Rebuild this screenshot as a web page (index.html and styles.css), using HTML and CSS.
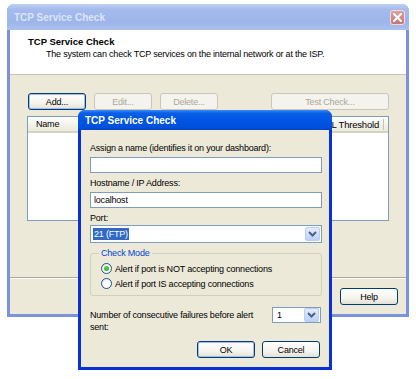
FILE: index.html
```html
<!DOCTYPE html>
<html lang="en">
<head>
  <meta charset="UTF-8" />
  <title>TCP Service Check</title>
  <link rel="stylesheet" href="styles.css">
</head>
<body>
  <div class="desktop">

    <!-- Background window (inactive) -->
    <div class="window main-window">
      <div class="titlebar inactive">
        <span class="title-text">TCP Service Check</span>
        <span class="close-btn">
          <svg width="9" height="9" viewBox="0 0 9 9"><path d="M1 1 L8 8 M8 1 L1 8" stroke="#fff" stroke-width="2" stroke-linecap="square"/></svg>
        </span>
      </div>
      <div class="window-body">
        <div class="banner">
          <div class="banner-title">TCP Service Check</div>
          <div class="banner-sub">The system can check TCP services on the internal network or at the ISP.</div>
        </div>
        <div class="panel">
          <div class="toolbar">
            <button class="btn default">Add...</button>
            <button class="btn" disabled>Edit...</button>
            <button class="btn" disabled>Delete...</button>
            <span class="spacer"></span>
            <button class="btn wide" disabled>Test Check...</button>
          </div>
          <div class="listview">
            <div class="lv-head">
              <span class="col-name">Name</span>
              <span class="col-thresh">FAIL Threshold</span>
            </div>
          </div>
        </div>
        <div class="footer">
          <button class="btn">Help</button>
        </div>
      </div>
    </div>

    <!-- Modal dialog (active) -->
    <div class="window dialog">
      <div class="titlebar active">
        <span class="title-text">TCP Service Check</span>
      </div>
      <div class="dialog-body">
        <label class="field-label">Assign a name (identifies it on your dashboard):</label>
        <input class="textbox" type="text" value="">

        <label class="field-label">Hostname / IP Address:</label>
        <input class="textbox" type="text" value="localhost">

        <label class="field-label">Port:</label>
        <div class="combo">
          <span class="combo-value"><span class="selected">21 (FTP)</span></span>
          <span class="combo-arrow">
            <svg width="9" height="6" viewBox="0 0 9 6"><path d="M1 1 L4.5 4.5 L8 1" fill="none" stroke="#4d6185" stroke-width="2"/></svg>
          </span>
        </div>

        <fieldset class="groupbox">
          <legend>Check Mode</legend>
          <div class="radio-row"><span class="radio checked"></span>Alert if port is NOT accepting connections</div>
          <div class="radio-row"><span class="radio"></span>Alert if port IS accepting connections</div>
        </fieldset>

        <div class="failures-row">
          <span class="failures-text">Number of consecutive failures before alert sent:</span>
          <div class="combo small">
            <span class="combo-value">1</span>
            <span class="combo-arrow">
              <svg width="9" height="6" viewBox="0 0 9 6"><path d="M1 1 L4.5 4.5 L8 1" fill="none" stroke="#4d6185" stroke-width="2"/></svg>
            </span>
          </div>
        </div>

        <div class="dialog-buttons">
          <button class="btn default">OK</button>
          <button class="btn">Cancel</button>
        </div>
      </div>
    </div>

  </div>
</body>
</html>
```

FILE: styles.css
```css
:root {
  --face: #ece9d8;
  --shadow: #aca899;
  --field-border: #7f9db9;
  --btn-border: #003c74;
  --disabled: #aca899;
  --active-frame: #0831d9;
  --inactive-frame: #7b93dd;
}

* {
  box-sizing: border-box;
}

body {
  margin: 0;
  background: #fff;
  font-family: 'Liberation Sans', Arial, sans-serif;
  font-size: 9px;
  letter-spacing: -0.2px;
  color: #000;
}

.desktop {
  position: relative;
  width: 416px;
  height: 379px;
  overflow: hidden;
}

/* ---------- generic window ---------- */

.window {
  position: absolute;
  display: flex;
  flex-direction: column;
  border-radius: 7px 7px 0 0;
  overflow: hidden;
}

.titlebar {
  display: flex;
  align-items: center;
  flex-shrink: 0;
  font-weight: bold;
  font-size: 10px;
  letter-spacing: 0;
}

.titlebar.inactive {
  height: 26px;
  padding: 0 4px 0 7px;
  background: linear-gradient(to bottom, #c3d2f5 0%, #a5bbec 20%, #9db5ea 70%, #abc0ee 100%);
  color: #dae4f8;
}

.titlebar.active {
  height: 20px;
  padding: 0 6px 0 7px;
  background: linear-gradient(to bottom, #3d8df5 0%, #0a5fe6 15%, #0054e3 55%, #0050dc 85%, #0146c8 100%);
  color: #fff;
}

.title-text {
  flex: 1;
}

.close-btn {
  width: 15px;
  height: 15px;
  margin-top: 1px;
  border: 1px solid #f2dada;
  border-radius: 3px;
  background: linear-gradient(to bottom, #dca0a0, #c57676);
  display: flex;
  align-items: center;
  justify-content: center;
}

/* ---------- main window ---------- */

.main-window {
  left: 7px;
  top: 4px;
  width: 402px;
  height: 313px;
  background: var(--inactive-frame);
}

.window-body {
  flex: 1;
  display: flex;
  flex-direction: column;
  margin: 0 3px 3px;
  background: var(--face);
}

.banner {
  height: 45px;
  background: #fff;
  border-bottom: 1px solid #c6c3b5;
  padding: 5px 0 0 18px;
  line-height: 13px;
}

.banner-title {
  font-weight: bold;
  font-size: 9.5px;
  letter-spacing: 0;
}

.banner-sub {
  padding-left: 18px;
}

.panel {
  flex: 1;
  padding: 18px 17px 0 17px;
  border-bottom: 1px solid var(--shadow);
}

.toolbar {
  display: flex;
  gap: 8px;
  padding-left: 1px;
}

.spacer {
  flex: 1;
}

.listview {
  margin-top: 6px;
  height: 105px;
  background: #fff;
  border: 1px solid var(--field-border);
}

.lv-head {
  height: 16px;
  display: flex;
  align-items: center;
  background: linear-gradient(to bottom, #fff, #ebeadb);
  border-bottom: 2px solid #d6d2c2;
}

.col-name {
  padding-left: 8px;
  width: 60px;
}

.col-thresh {
  margin-left: auto;
  padding-right: 4px;
  margin-right: 4px;
  border-right: 1px solid #c7c5b2;
  font-size: 9.5px;
}

.footer {
  height: 36px;
  display: flex;
  align-items: center;
  justify-content: flex-end;
  padding-right: 8px;
  border-top: 1px solid #fff;
}

/* ---------- buttons ---------- */

.btn {
  height: 17px;
  width: 58px;
  padding: 0;
  font-family: inherit;
  font-size: 9px;
  letter-spacing: -0.2px;
  color: #000;
  border: 1px solid var(--btn-border);
  border-radius: 3px;
  background: linear-gradient(to bottom, #fff 0%, #f5f4ee 60%, #e3e1d4 100%);
}

.btn.wide {
  width: 118px;
}

.btn:disabled {
  color: var(--disabled);
  border-color: #c9c7ba;
  background: #f4f3ee;
}

.btn.default {
  box-shadow: inset 0 0 0 1px #a6bcee;
}

/* ---------- dialog ---------- */

.dialog {
  left: 78px;
  top: 110px;
  width: 254px;
  height: 260px;
  background: var(--active-frame);
  border-radius: 7px 7px 0 0;
}

.dialog-body {
  flex: 1;
  display: flex;
  flex-direction: column;
  margin: 0 3px 3px;
  padding: 12px 7px 0 9px;
  background: var(--face);
}

.field-label {
  display: block;
  line-height: 13px;
}

.textbox {
  display: block;
  width: 100%;
  height: 16px;
  margin: 2px 0 4px;
  padding: 0 3px;
  border: 1px solid var(--field-border);
  background: #fff;
  font-family: inherit;
  font-size: 9px;
  letter-spacing: -0.2px;
  outline: none;
}

.combo {
  display: flex;
  align-items: center;
  height: 18px;
  padding: 1px;
  border: 1px solid var(--field-border);
  background: #fff;
}

.combo-value {
  flex: 1;
  padding-left: 1px;
  line-height: 14px;
}

.selected {
  background: #316ac5;
  color: #fff;
  padding: 1px 1px;
}

.combo-arrow {
  width: 15px;
  height: 14px;
  border: 1px solid #b9cdf6;
  border-radius: 2px;
  background: linear-gradient(to bottom, #e3ecfe, #bcd0fa);
  display: flex;
  align-items: center;
  justify-content: center;
}

.groupbox {
  margin: 4px 0 0;
  padding: 2px 0 4px 6px;
  border: 1px solid #d0d0bf;
  border-radius: 3px;
  min-width: 0;
}

.groupbox legend {
  padding: 0 2px;
  margin-left: 2px;
  color: #0046d5;
  line-height: 12px;
}

.radio-row {
  display: flex;
  align-items: center;
  gap: 3px;
  height: 15px;
  padding-left: 4px;
}

.radio {
  width: 11px;
  height: 11px;
  border: 1px solid #1c5180;
  border-radius: 50%;
  background: radial-gradient(circle at 60% 60%, #fff 40%, #dcdcd5 100%);
  display: flex;
  align-items: center;
  justify-content: center;
}

.radio.checked::after {
  content: "";
  width: 5px;
  height: 5px;
  border-radius: 50%;
  background: radial-gradient(circle at 40% 40%, #55d551, #21a121);
}

.failures-row {
  display: flex;
  align-items: flex-start;
  justify-content: space-between;
  margin-top: 11px;
}

.failures-text {
  width: 168px;
  line-height: 12px;
  margin-top: 2px;
}

.combo.small {
  width: 49px;
  height: 16px;
  margin: 0 1px 0 0;
}

.combo.small .combo-value {
  padding-left: 3px;
}

.dialog-buttons {
  display: flex;
  justify-content: flex-end;
  gap: 7px;
  margin-top: 8px;
  padding-right: 2px;
}
```
